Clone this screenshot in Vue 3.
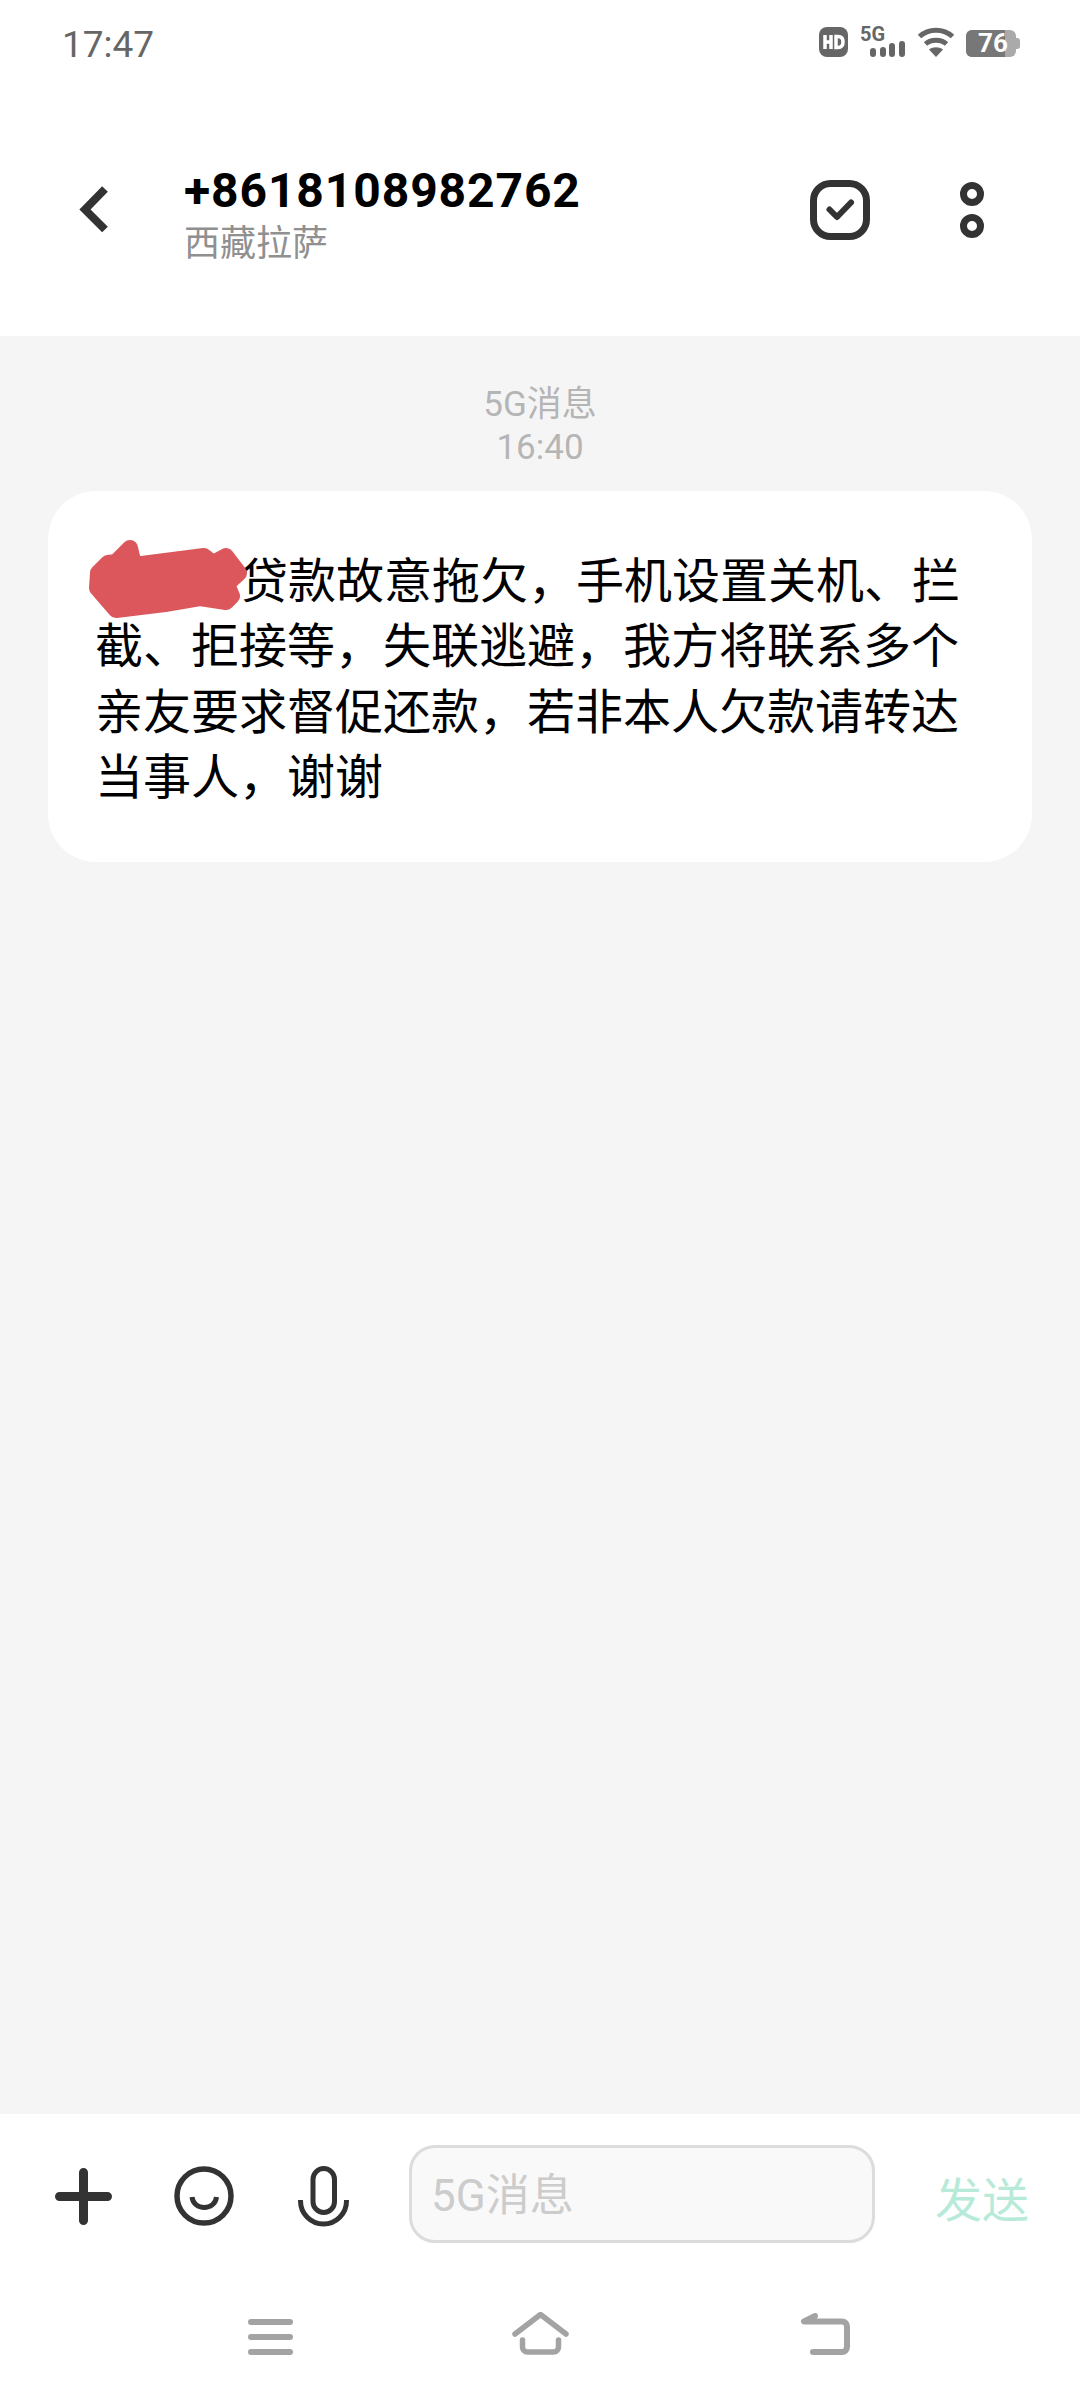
<script setup>
const messageLines = [
  '贷款故意拖欠，手机设置关机、拦',
  '截、拒接等，失联逃避，我方将联系多个',
  '亲友要求督促还款，若非本人欠款请转达',
  '当事人，谢谢',
]
</script>

<template>
  <div class="screen">
    <div class="status">
      <span class="clock">17:47</span>
      <div class="status-icons">
        <svg width="29" height="30" viewBox="0 0 29 30">
          <rect width="29" height="30" rx="8" fill="#666" />
          <path d="M6 8v14M6 15h6M12 8v14M17 9.500v11h2c3.500 0 5-2 5-5.500s-1.500-5.500-5-5.500z" fill="none" stroke="#fff" stroke-width="3.500" />
        </svg>
        <div class="net">
          <span class="net-label">5G</span>
          <svg class="signal" width="35" height="16" viewBox="0 0 35 16">
            <rect x="0" y="7" width="6" height="9" rx="3" fill="#666" />
            <rect x="10" y="6" width="6" height="10" rx="3" fill="#666" />
            <rect x="19" y="2" width="6" height="14" rx="3" fill="#666" />
            <rect x="29" y="0" width="6" height="16" rx="3" fill="#666" />
          </svg>
        </div>
        <svg width="38" height="30" viewBox="0 0 38 30">
          <path d="M2.500 9.500C11.500 1 26.500 1 35.500 9.500M8.500 17C14 12 24 12 29.500 17" fill="none" stroke="#666" stroke-width="5" />
          <path d="M19 30l-7-7.500c4-3 10-3 14 0z" fill="#666" />
        </svg>
        <div class="battery">
          <div class="battery-fill"></div>
          <span class="battery-text">76</span>
          <i class="battery-tip"></i>
        </div>
      </div>
    </div>

    <header class="top">
      <svg class="back" width="32" height="50" viewBox="0 0 32 50">
        <path d="M29 4L9 24.500l20 20" fill="none" stroke="#333" stroke-width="8" />
      </svg>
      <div class="contact">
        <div class="number">+8618108982762</div>
        <div class="place">西藏拉萨</div>
      </div>
      <svg class="check" width="60" height="60" viewBox="0 0 60 60">
        <rect x="3.500" y="3.500" width="53" height="53" rx="17" fill="none" stroke="#333" stroke-width="7" />
        <path d="M19.500 29.500l7.500 7.500 14-14.500" fill="none" stroke="#333" stroke-width="6" stroke-linecap="round" stroke-linejoin="round" />
      </svg>
      <svg class="more" width="24" height="56" viewBox="0 0 24 56">
        <circle cx="12" cy="12" r="8.500" fill="none" stroke="#333" stroke-width="7" />
        <circle cx="12" cy="44" r="8.500" fill="none" stroke="#333" stroke-width="7" />
      </svg>
    </header>

    <main class="thread">
      <div class="meta">
        <div>5G消息</div>
        <div>16:40</div>
      </div>
      <div class="bubble">
        <p v-for="(line, i) in messageLines" :key="i" class="line" :class="{ first: i === 0 }">{{ line }}</p>
        <!-- hand-drawn red scribble over the name -->
        <svg class="scribble" width="162" height="84" viewBox="0 0 162 84">
          <path d="M44 12L48 29L118 20L127 27L140 20L153 37L141 48L146 60L140 66L114 62L79 68L30 74L11 52L12 37L22 27L30 26z" fill="#dc575c" stroke="#dc575c" stroke-width="16" stroke-linejoin="round" />
        </svg>
      </div>
    </main>

    <footer class="composer">
      <svg width="57" height="57" viewBox="0 0 57 57">
        <path d="M28.500 4.500v48M4.500 28.500h48" stroke="#333" stroke-width="9" stroke-linecap="round" />
      </svg>
      <svg class="smile" width="60" height="60" viewBox="0 0 60 60">
        <circle cx="30" cy="30" r="27" fill="none" stroke="#333" stroke-width="5.500" />
        <path d="M18 31c1.500 14 23 14 24.500 0" fill="none" stroke="#333" stroke-width="5" />
      </svg>
      <svg class="mic" width="51" height="61" viewBox="0 0 51 61">
        <rect x="15" y="2.500" width="21.500" height="44" rx="10.750" fill="none" stroke="#333" stroke-width="5" />
        <path d="M2.500 34v1a23 23 0 0 0 46 0v-1" fill="none" stroke="#333" stroke-width="5" />
      </svg>
      <div class="input">5G消息</div>
      <span class="send">发送</span>
    </footer>

    <nav class="nav">
      <svg width="45" height="36" viewBox="0 0 45 36">
        <path d="M3 3h39M3 18h39M3 33h39" stroke="#a3a3a3" stroke-width="6" stroke-linecap="round" />
      </svg>
      <svg class="nav-home" width="57" height="43" viewBox="0 0 57 43">
        <path d="M3 22L28.500 2.500 54 22" fill="none" stroke="#a3a3a3" stroke-width="5.500" stroke-linecap="round" stroke-linejoin="round" />
        <path d="M10.500 28v7a5 5 0 0 0 5 5h26a5 5 0 0 0 5-5v-7" fill="none" stroke="#a3a3a3" stroke-width="5.500" stroke-linecap="round" />
      </svg>
      <svg class="nav-back" width="49" height="42" viewBox="0 0 49 42">
        <path d="M14 3L3 8.500H41a5 5 0 0 1 5 5V34a5 5 0 0 1-5 5H12" fill="none" stroke="#a3a3a3" stroke-width="6" stroke-linecap="round" stroke-linejoin="round" />
      </svg>
    </nav>
  </div>
</template>

<style>
html,
body {
  margin: 0;
  background: #fff;
}
</style>

<style scoped>
.screen {
  width: 1080px;
  height: 2400px;
  display: flex;
  flex-direction: column;
  font-family: "Roboto", "Noto Sans CJK SC", sans-serif;
  background: #fff;
}
.status {
  height: 88px;
  flex-shrink: 0;
  display: flex;
  align-items: center;
  justify-content: space-between;
  padding: 0 64px 0 62px;
  box-sizing: border-box;
}
.clock {
  font-size: 37px;
  color: #666;
}
.status-icons {
  display: flex;
  align-items: flex-start;
  gap: 12px;
  height: 30px;
  margin-bottom: 4px;
}
.net {
  display: flex;
  flex-direction: column;
  width: 45px;
}
.net-label {
  font-size: 20px;
  line-height: 14px;
  font-weight: 700;
  color: #666;
}
.signal {
  align-self: flex-end;
}
.battery {
  position: relative;
  width: 50px;
  height: 27px;
  margin: 3px 0 0 -1px;
  background: #aaa;
  border-radius: 6px;
}
.battery-fill {
  width: 39px;
  height: 100%;
  background: #777;
  border-radius: 6px 0 0 6px;
}
.battery-text {
  position: absolute;
  left: 12px;
  top: 0;
  font-size: 26px;
  line-height: 27px;
  font-weight: 700;
  color: #fff;
}
.battery-tip {
  position: absolute;
  right: -4px;
  top: 8px;
  width: 4px;
  height: 11px;
  background: #aaa;
  border-radius: 0 3px 3px 0;
}
.top {
  height: 248px;
  flex-shrink: 0;
  box-sizing: border-box;
  padding: 0 96px 4px 76px;
  display: flex;
  align-items: center;
}
.back {
  flex-shrink: 0;
}
.contact {
  flex: 1;
  margin: 12px 0 0 76px;
}
.number {
  font-size: 48px;
  line-height: 56px;
  font-weight: 700;
  letter-spacing: 0.9px;
  color: #000;
}
.place {
  font-size: 36px;
  line-height: 50px;
  color: #909090;
}
.check {
  margin-right: 90px;
}
.thread {
  flex: 1;
  min-height: 0;
  background: #f5f5f5;
  padding: 0 48px;
}
.meta {
  padding-top: 47px;
  text-align: center;
  font-size: 35px;
  line-height: 43px;
  color: #b5b5b5;
}
.bubble {
  position: relative;
  margin-top: 22px;
  background: #fff;
  border-radius: 48px;
  padding: 58px 48px 50px 47px;
  height: 371px;
  box-sizing: border-box;
}
.scribble {
  position: absolute;
  left: 38px;
  top: 45px;
}
.line {
  margin: 0;
  font-size: 48px;
  line-height: 65.3px;
  color: #000;
  white-space: nowrap;
}
.first {
  padding-left: 145px;
}
.composer {
  height: 164px;
  flex-shrink: 0;
  box-sizing: border-box;
  display: flex;
  align-items: center;
  padding-left: 55px;
}
.composer svg {
  flex-shrink: 0;
}
.smile {
  margin-left: 62px;
}
.mic {
  margin-left: 64px;
}
.input {
  width: 466px;
  height: 98px;
  margin: 0 0 4px 60px;
  box-sizing: border-box;
  border: 3px solid #dcdcdc;
  border-radius: 26px;
  background: #f9f9f9;
  padding-left: 19px;
  font-size: 44px;
  line-height: 96px;
  color: #ccc;
}
.send {
  margin-left: 60px;
  font-size: 47px;
  color: #b8ead9;
}
.nav {
  height: 122px;
  flex-shrink: 0;
  display: flex;
  align-items: flex-end;
  padding: 0 0 45px 248px;
  box-sizing: border-box;
}
.nav-home {
  margin-left: 219px;
}
.nav-back {
  margin-left: 232px;
}
</style>
